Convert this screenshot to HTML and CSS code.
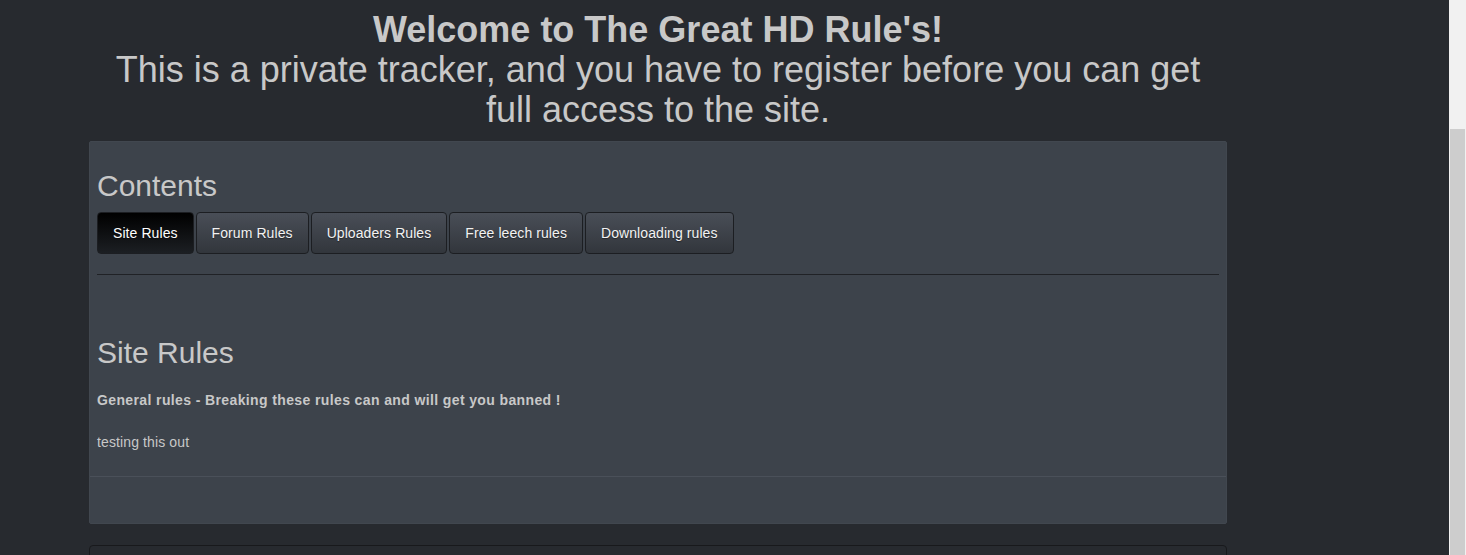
FILE: index.html
```html
<!DOCTYPE html>
<html lang="en">
<head>
<meta charset="utf-8">
<title>The Great HD Rules</title>
<link rel="stylesheet" href="styles.css">
</head>
<body>
<div class="page">
  <header class="intro">
    <div class="intro-title">Welcome to The Great HD Rule's!</div>
    <div class="intro-text">This is a private tracker, and you have to register before you can get full access to the site.</div>
  </header>

  <div class="panel">
    <div class="panel-body">
      <h2 class="heading">Contents</h2>
      <div class="tabs">
        <button class="tab active">Site Rules</button>
        <button class="tab">Forum Rules</button>
        <button class="tab">Uploaders Rules</button>
        <button class="tab">Free leech rules</button>
        <button class="tab">Downloading rules</button>
      </div>
      <hr class="divider">
      <section class="rules">
        <h2 class="heading">Site Rules</h2>
        <p class="rules-lead">General rules - Breaking these rules can and will get you banned !</p>
        <p class="rules-text">testing this out</p>
      </section>
    </div>
    <div class="panel-footer"></div>
  </div>

  <div class="panel-next"></div>
</div>

<div class="fake-scrollbar"><div class="fake-thumb"></div></div>
</body>
</html>
```

FILE: styles.css
```css
html {
  overflow: hidden;
}

body {
  margin: 0;
  background: #272a2f;
  color: #c8c8c8;
  font-family: "Liberation Sans", Arial, sans-serif;
  font-size: 14px;
  line-height: 20px;
}

.page {
  width: 1138px;
  padding: 10px 0 0 89px;
}

.intro {
  text-align: center;
  font-size: 36px;
  line-height: 40px;
  margin-bottom: 11px;
}

.intro-title {
  font-weight: bold;
}

.panel {
  background: #3d434b;
  border: 1px solid #41474f;
  border-radius: 2px;
}

.panel-body {
  padding: 8px 7px 24px 7px;
}

.heading {
  font-size: 30px;
  line-height: 33px;
  font-weight: normal;
  margin: 19px 0 10px 0;
  color: #c8c8c8;
}

.tabs {
  display: flex;
  gap: 2px;
}

.tab {
  font-family: "Liberation Sans", Arial, sans-serif;
  font-size: 14px;
  line-height: 20px;
  letter-spacing: 0.08px;
  padding: 10px 15px;
  color: #f2f2f2;
  background: linear-gradient(to bottom, #494e57 0%, #32363c 100%);
  border: 1px solid #1c1e22;
  border-radius: 4px;
  text-shadow: 0 1px 1px rgba(0, 0, 0, 0.4);
  cursor: pointer;
}

.tab.active {
  color: #ffffff;
  background: linear-gradient(to bottom, #000000 0%, #1c1f23 100%);
}

.divider {
  border: 0;
  border-top: 1px solid #202226;
  margin: 20px 0 0 0;
  height: 0;
}

.rules {
  padding-top: 41px;
}

.rules .heading {
  margin-top: 20px;
}

.rules-lead {
  font-weight: bold;
  font-size: 14px;
  line-height: 20px;
  letter-spacing: 0.38px;
  margin: 21px 0 22px 0;
}

.rules-text {
  margin: 0;
  letter-spacing: 0.12px;
}

.panel-footer {
  height: 46px;
  border-top: 1px solid #4a5059;
}

.panel-next {
  margin-top: 21px;
  height: 40px;
  border: 1px solid #18191c;
  border-radius: 4px;
  background: #272a2f;
}

.fake-scrollbar {
  position: fixed;
  top: 0;
  right: 0;
  width: 17px;
  height: 100%;
  background: #f1f1f1;
}

.fake-thumb {
  position: absolute;
  top: 129px;
  left: 1px;
  right: 1px;
  bottom: 0;
  background: #cdcdcd;
}
```
